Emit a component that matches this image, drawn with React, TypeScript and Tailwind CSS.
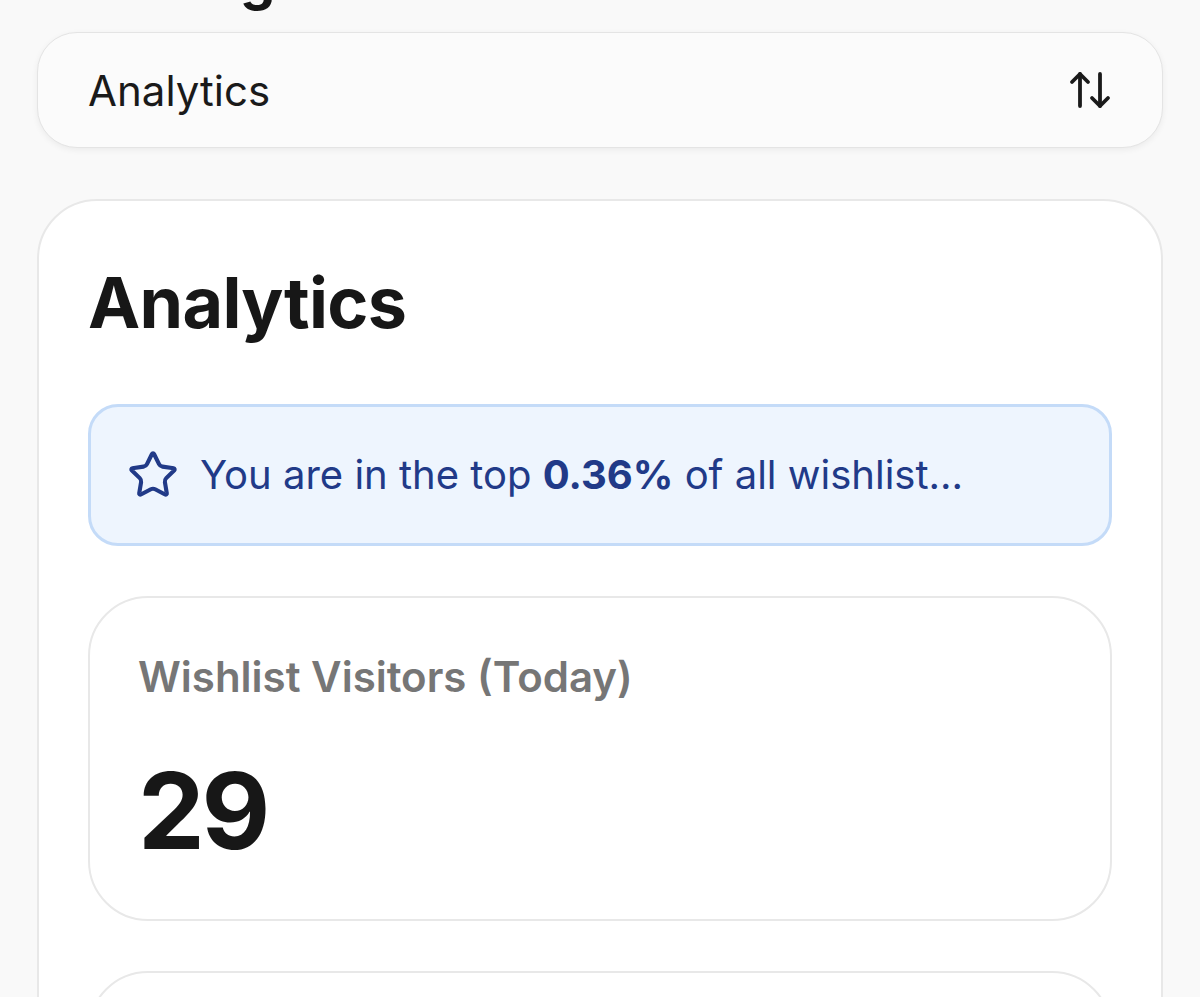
import { ArrowUpDown, Star } from "lucide-react";

const stats = [
  { id: "today", label: "Wishlist Visitors (Today)", value: "29" },
  { id: "week", label: "Wishlist Visitors (7 Days)", value: "184" },
];

const App = () => {
  return (
    <div
      className="h-[997px] overflow-hidden bg-[#f9f9f9] px-[37px] text-[#171717]"
      style={{ fontFamily: "Inter, 'Noto Sans', sans-serif" }}
    >
      <h1 className="mt-[-49px] mb-[25px] pl-[51px] text-[56px] font-bold leading-none">Manage</h1>

      <button className="flex h-[116px] w-full items-center justify-between rounded-[40px] border-[1.5px] border-[#e4e4e4] bg-[#fbfbfb] pl-[50px] pr-[48px] shadow-[0_2px_6px_rgba(0,0,0,0.06)]">
        <span className="text-[42px] text-[#1a1a1a]">Analytics</span>
        <ArrowUpDown size={48} strokeWidth={1.9} className="text-[#1a1a1a]" />
      </button>

      <section className="mt-[51px] rounded-[60px] border-2 border-[#e8e8e8] bg-white px-[49px] pt-[67px] pb-12">
        <h2 className="text-[70px] font-bold leading-none tracking-[-0.01em]">Analytics</h2>

        <div className="mt-[66px] flex h-[142px] items-center gap-[21px] rounded-[30px] border-[3px] border-[#c4dbf8] bg-[#eef5fe] pl-[36px] text-[#213a88]">
          <Star size={52} strokeWidth={1.9} />
          <p className="text-[40px]">
            You are in the top <span className="font-bold">0.36%</span> of all wishlist...
          </p>
        </div>

        <div className="mt-[50px] flex flex-col gap-[50px]">
          {stats.map((stat) => (
            <div
              key={stat.id}
              className="h-[325px] rounded-[60px] border-2 border-[#e8e8e8] bg-white px-[48px] pt-[47px]"
            >
              <p className="text-[42px] font-semibold text-[#767676]">{stat.label}</p>
              <p className="mt-[50px] text-[106px] font-bold leading-none tracking-[-0.03em]">{stat.value}</p>
            </div>
          ))}
        </div>
      </section>
    </div>
  );
};

export default App;
